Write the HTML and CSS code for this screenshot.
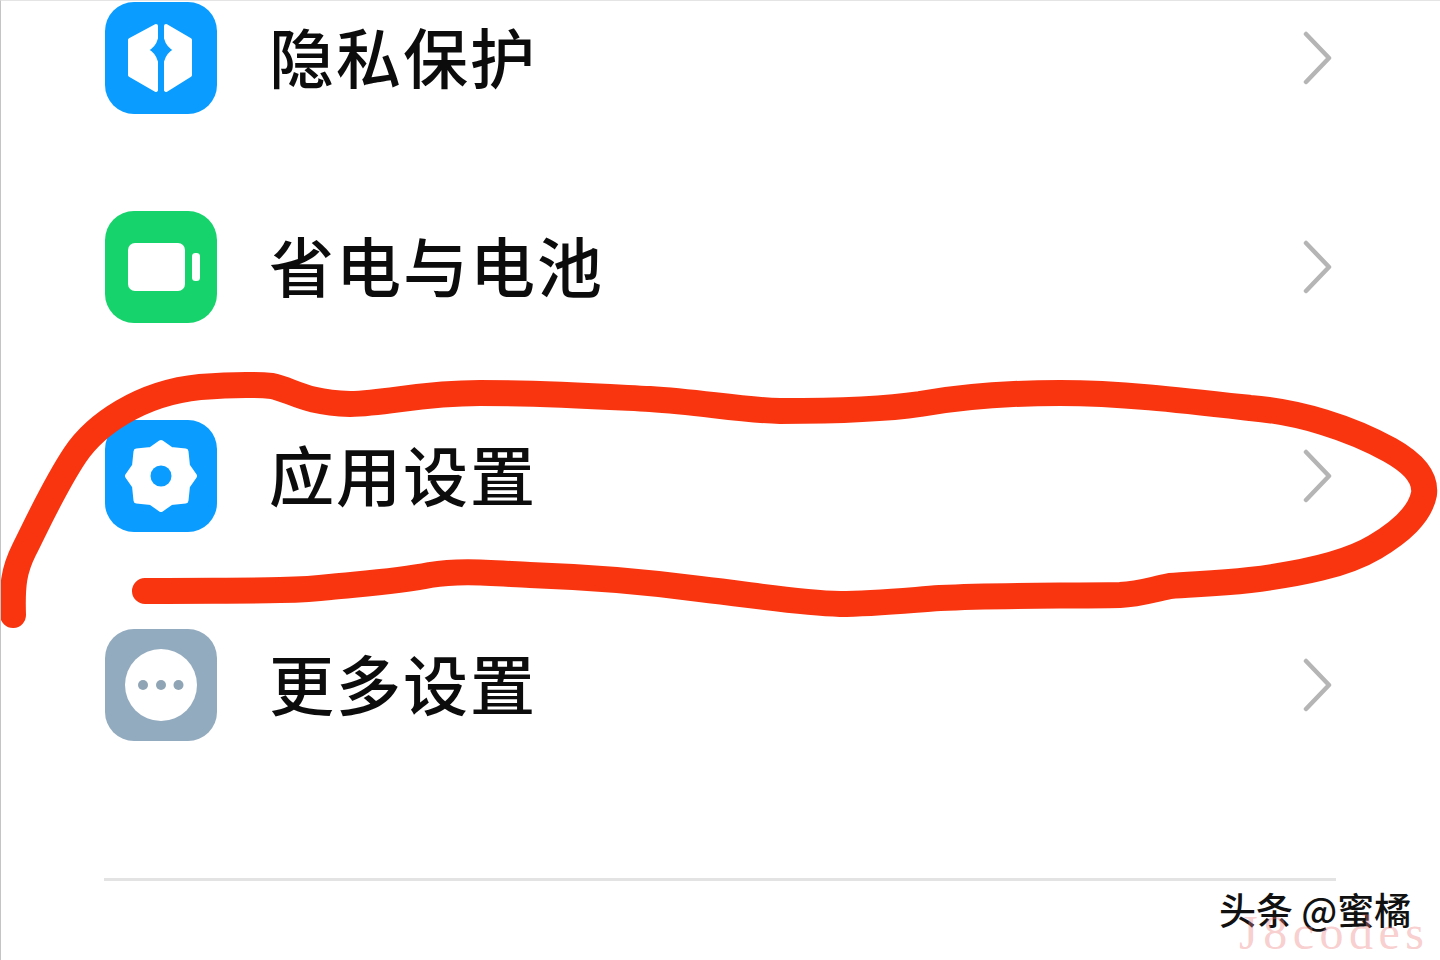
FILE: index.html
```html
<!DOCTYPE html>
<html lang="zh-CN">
<head>
<meta charset="utf-8">
<title>设置</title>
<link rel="stylesheet" href="styles.css">
</head>
<body>
<main class="page">
  <ul class="list">
    <li class="row">
      <svg class="icon" viewBox="0 0 112 112"><rect width="112" height="112" rx="29" fill="#0a9dff"/><path d="M51 24 L25 38 V73 L51 88 V60 Q49 52 41 48 Q49 44 51 36 Z M61 24 L85 38 V73 L61 88 V60 Q63 52 71 48 Q63 44 61 36 Z" fill="#fff" stroke="#fff" stroke-width="4" stroke-linejoin="round"/></svg>
      <span class="label">隐私保护</span>
      <svg class="chev" viewBox="0 0 32 54"><path d="M3 3 L26 27 L3 51" fill="none" stroke="#b5b5b5" stroke-width="4.5" stroke-linecap="round" stroke-linejoin="round"/></svg>
    </li>
    <li class="row">
      <svg class="icon" viewBox="0 0 112 112"><rect width="112" height="112" rx="29" fill="#16d36c"/><rect x="23" y="32" width="57" height="48" rx="7" fill="#fff"/><rect x="87" y="42" width="8" height="28" rx="3.5" fill="#fff"/></svg>
      <span class="label">省电与电池</span>
      <svg class="chev" viewBox="0 0 32 54"><path d="M3 3 L26 27 L3 51" fill="none" stroke="#b5b5b5" stroke-width="4.5" stroke-linecap="round" stroke-linejoin="round"/></svg>
    </li>
    <li class="row">
      <svg class="icon" viewBox="0 0 112 112"><rect width="112" height="112" rx="29" fill="#0a9dff"/><polygon points="56,23 65.900,30 80.500,31.500 82,46.100 89,56 82,65.900 80.500,80.500 65.900,82 56,89 46.100,82 31.500,80.500 30,65.900 23,56 30,46.100 31.500,31.500 46.100,30" fill="#fff" stroke="#fff" stroke-width="6" stroke-linejoin="round"/><circle cx="56" cy="56" r="10.5" fill="#0a9dff"/></svg>
      <span class="label">应用设置</span>
      <svg class="chev" viewBox="0 0 32 54"><path d="M3 3 L26 27 L3 51" fill="none" stroke="#b5b5b5" stroke-width="4.5" stroke-linecap="round" stroke-linejoin="round"/></svg>
    </li>
    <li class="row">
      <svg class="icon" viewBox="0 0 112 112"><rect width="112" height="112" rx="29" fill="#93abbf"/><circle cx="56" cy="56" r="36" fill="#fff"/><circle cx="38" cy="56" r="5" fill="#8fa5b5"/><circle cx="56" cy="56" r="5" fill="#8fa5b5"/><circle cx="73.500" cy="56" r="5" fill="#8fa5b5"/></svg>
      <span class="label">更多设置</span>
      <svg class="chev" viewBox="0 0 32 54"><path d="M3 3 L26 27 L3 51" fill="none" stroke="#b5b5b5" stroke-width="4.5" stroke-linecap="round" stroke-linejoin="round"/></svg>
    </li>
  </ul>
  <hr class="rule">
  <svg class="ink" viewBox="0 0 1440 960"><path d="M13 615 C12 585 14 570 24 550 C40 518 55 485 75 455 C95 425 140 393 200 387 C225 385 250 384 272 386 C292 390 305 403 350 404 C390 403 420 393 480 393 C540 393 590 396 650 399 C700 402 740 410 780 411 C820 411 880 410 920 404 C960 397 1000 393 1060 393 C1120 393 1180 400 1250 408 C1300 412 1350 428 1390 450 C1415 464 1426 478 1424 494 C1420 515 1400 532 1375 547 C1345 565 1300 574 1250 580 C1215 584 1190 584 1170 586 C1150 590 1140 594 1120 595 C1060 596 1000 595 940 598 C900 601 870 604 840 604 C800 603 760 596 700 589 C640 581 590 577 530 575 C490 573 460 570 430 575 C400 581 370 583 330 587 C290 592 230 590 145 591" fill="none" stroke="#f93510" stroke-width="26" stroke-linecap="round" stroke-linejoin="round"/></svg>
  <span class="credit">头条 @蜜橘</span>
  <span class="mark">J8codes</span>
</main>
</body>
</html>
```
FILE: styles.css
```css
* { box-sizing: border-box; }
html, body { margin: 0; height: 100%; background: #fff; }
.page {
  position: relative;
  width: 1440px;
  height: 960px;
  overflow: hidden;
  background: #fff;
  border-left: 1px solid #c4c4c4;
  border-top: 1px solid #e4e4e4;
  padding: 1px 104px 0 104px;
  font-family: "Noto Sans CJK SC", "Noto Sans", sans-serif;
}
.list {
  list-style: none;
  margin: 0;
  padding: 0;
  display: flex;
  flex-direction: column;
  gap: 97px;
}
.row {
  display: flex;
  align-items: center;
  height: 112px;
}
.icon { width: 112px; height: 112px; flex: none; }
.label {
  flex: 1;
  margin: 0 0 6px 52px;
  font-size: 65px;
  letter-spacing: 2px;
  font-weight: 500;
  line-height: 112px;
  color: #0c0c0c;
}
.chev { width: 32px; height: 54px; flex: none; margin-right: 1px; }
.rule {
  margin: 137px 0 0 -1px;
  border: 0;
  height: 3px;
  background: #e3e3e3;
}
.ink { position: absolute; left: -1px; top: -1px; width: 1440px; height: 960px; }
.credit {
  position: absolute;
  left: 1218px;
  top: 883px;
  font-size: 37px;
  font-weight: 500;
  line-height: 50px;
  color: #111;
  white-space: nowrap;
}
.mark {
  position: absolute;
  left: 1238px;
  top: 908px;
  font-family: "Liberation Serif", serif;
  font-size: 48px;
  line-height: 48px;
  letter-spacing: 5.5px;
  color: rgba(240, 130, 130, 0.4);
  white-space: nowrap;
}
```
